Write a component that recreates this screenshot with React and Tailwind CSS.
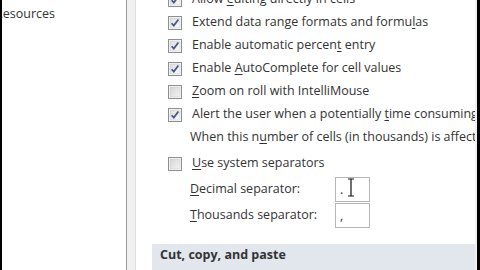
import React from 'react';

const Check = ({ checked }) => (
    <svg width="14" height="14" viewBox="0 0 14 14" className="shrink-0">
        <defs>
            <linearGradient id={checked ? 'cbOn' : 'cbOff'} x1="0" y1="0" x2="1" y2="1">
                <stop offset="0" stopColor={checked ? '#dcdcdc' : '#d4d4d4'} />
                <stop offset="1" stopColor={checked ? '#fbfbfb' : '#f4f4f4'} />
            </linearGradient>
        </defs>
        <rect x="0.5" y="0.5" width="13" height="13" fill="#ffffff" stroke="#8e8f8f" />
        <rect x="2" y="2" width="10" height="10" fill={`url(#${checked ? 'cbOn' : 'cbOff'})`} stroke="#c9c9c9" strokeWidth="0.6" />
        {checked && (
            <path d="M3.6 7.2 L5.8 9.6 L10.4 3.6" fill="none" stroke="#46558a" strokeWidth="1.7" />
        )}
    </svg>
);

const U = ({ children }) => <span className="underline underline-offset-2">{children}</span>;

const CheckRow = ({ checked, children }) => (
    <div className="h-[23px] flex items-center gap-[10px] whitespace-nowrap">
        <Check checked={checked} />
        <span>{children}</span>
    </div>
);

const App = () => {
    return (
        <div
            className="w-[480px] h-[270px] flex overflow-hidden bg-white text-[#333333] text-[12.5px]"
            style={{ fontFamily: '"Open Sans", "Noto Sans", sans-serif' }}
        >
            <div className="w-[2px] bg-black shrink-0" />

            {/* Sidebar */}
            <div className="w-[124px] shrink-0 overflow-hidden pt-[5px]">
                <div className="-ml-[7px] whitespace-nowrap">Resources</div>
            </div>

            {/* Divider */}
            <div className="w-[1px] bg-[#9c9c9c] shrink-0" />
            <div className="w-[8px] bg-[#f0f0f0] shrink-0" />
            <div className="w-[1px] bg-[#dedede] shrink-0" />

            {/* Options panel */}
            <div className="flex-1 overflow-hidden">
                <div className="-mt-[12px] pl-[32px]">
                    <CheckRow checked>Allow <U>e</U>diting directly in cells</CheckRow>
                    <CheckRow checked>Extend data range formats and formu<U>l</U>as</CheckRow>
                    <CheckRow checked>Enable automatic percen<U>t</U> entry</CheckRow>
                    <CheckRow checked>Enable <U>A</U>utoComplete for cell values</CheckRow>
                    <CheckRow checked={false}><U>Z</U>oom on roll with IntelliMouse</CheckRow>
                    <CheckRow checked>Alert the user when a potentially <U>t</U>ime consuming operation occurs</CheckRow>
                    <div className="h-[23px] flex items-center pl-[22px] whitespace-nowrap">
                        When this n<U>u</U>mber of cells (in thousands) is affected:
                    </div>
                    <div className="mt-[3px]">
                        <CheckRow checked={false}><U>U</U>se system separators</CheckRow>
                    </div>
                    <div className="mt-[2px] h-[25px] flex items-center pl-[22px]">
                        <span className="w-[145px] shrink-0"><U>D</U>ecimal separator:</span>
                        <div className="relative w-[35px] h-[25px] border border-[#b5b5b5] px-[4px] pt-[3px]">
                            .
                            <svg width="8" height="20" viewBox="0 0 8 20" className="absolute left-[11px] top-[0px]">
                                <path d="M1 1 H7 M4 1 V18 M1 18 H7" stroke="#111" strokeWidth="1.2" fill="none" />
                            </svg>
                        </div>
                    </div>
                    <div className="mt-[1px] h-[25px] flex items-center pl-[22px]">
                        <span className="w-[145px] shrink-0"><U>T</U>housands separator:</span>
                        <div className="w-[35px] h-[25px] border border-[#b5b5b5] px-[4px] pt-[3px]">,</div>
                    </div>
                </div>
                <div className="mt-[16px] ml-[16px] h-[30px] bg-[#e1e7ed] pl-[8px] pt-[2px] font-bold whitespace-nowrap">
                    Cut, copy, and paste
                </div>
            </div>

            <div className="w-[2px] bg-[#f0f0f0] shrink-0" />
            <div className="w-[3px] bg-black shrink-0" />
        </div>
    );
};

export default App;
